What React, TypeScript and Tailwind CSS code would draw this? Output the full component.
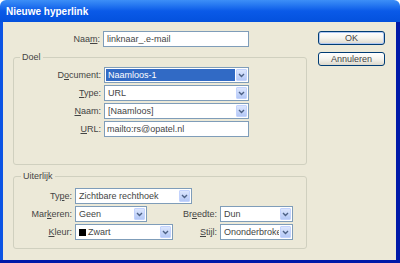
import React from "react";

function Chevron() {
  return (
    <svg width="7" height="5" viewBox="0 0 7 5" className="block">
      <path d="M1 1 L3.5 3.5 L6 1" fill="none" stroke="#4d6185" strokeWidth="1.4" />
    </svg>
  );
}

function Select({
  className,
  children,
  selected,
}: {
  className: string;
  children: React.ReactNode;
  selected?: boolean;
}) {
  return (
    <div className={"flex h-[16px] shrink-0 border border-[#7f9db9] bg-white p-[1px] " + className}>
      <div className="flex min-w-0 flex-1 items-center overflow-hidden pr-[1px]">
        <div
          className={
            "flex h-full min-w-0 flex-1 items-center overflow-hidden whitespace-nowrap pl-[2px] " +
            (selected ? "bg-[#316ac5] text-white" : "text-[#444]")
          }
        >
          {children}
        </div>
      </div>
      <div className="flex w-[11px] shrink-0 items-center justify-center rounded-[1px] border border-[#c3d3fd] bg-gradient-to-b from-[#dce6fd] to-[#b4c8f6]">
        <Chevron />
      </div>
    </div>
  );
}

function Label({ className, children }: { className: string; children: React.ReactNode }) {
  return <div className={"shrink-0 whitespace-nowrap text-right text-[#444] " + className}>{children}</div>;
}

function Button({ children, isDefault }: { children: React.ReactNode; isDefault?: boolean }) {
  return (
    <div
      className={
        "flex h-[14px] w-[67px] items-center justify-center rounded-[3px] border border-[#003c74] bg-gradient-to-b from-[#ffffff] via-[#f5f4ee] to-[#dcd8cc] text-[#444] " +
        (isDefault ? "shadow-[inset_0_0_0_1px_#b0c8f2]" : "")
      }
    >
      {children}
    </div>
  );
}

export default function App() {
  return (
    <div className="flex h-[263px] w-[400px] flex-col overflow-hidden font-['Liberation_Sans',Arial,sans-serif] text-[9px] leading-[11px]">
      <div className="flex h-[22px] shrink-0 items-center rounded-t-[6px] bg-gradient-to-b from-[#3d8ff7] via-[#0a5ae8] to-[#0451dd] pl-[6px]">
        <span className="text-[10px] font-bold text-white">Nieuwe hyperlink</span>
      </div>
      <div className="flex min-h-0 flex-1">
        <div className="w-[3px] shrink-0 bg-[#0b54e4]" />
        <div className="flex flex-1 bg-[#ece9d8] pl-[10px] pt-[9px]">
          <div className="flex w-[294px] shrink-0 flex-col">
            <div className="flex h-[16px] items-center">
              <Label className="w-[87px]">
                Naa<u>m</u>:
              </Label>
              <div className="ml-[3px] flex h-[16px] w-[146px] items-center border border-[#7f9db9] bg-white pl-[3px] text-[#444]">
                linknaar_.e-mail
              </div>
            </div>

            <fieldset className="mt-[5px] rounded-[3px] border border-[#d0d0bf] pb-[27px] pt-[4px]">
              <legend className="ml-[6px] px-[2px] text-[#444]">Doel</legend>
              <div className="flex flex-col gap-[2px]">
                <div className="flex items-center">
                  <Label className="w-[87px]">
                    D<u>o</u>cument:
                  </Label>
                  <Select className="ml-[3px] w-[145px]" selected>
                    Naamloos-1
                  </Select>
                </div>
                <div className="flex items-center">
                  <Label className="w-[87px]">
                    <u>T</u>ype:
                  </Label>
                  <Select className="ml-[3px] w-[145px]">URL</Select>
                </div>
                <div className="flex items-center">
                  <Label className="w-[87px]">
                    <u>N</u>aam:
                  </Label>
                  <Select className="ml-[3px] w-[145px]">[Naamloos]</Select>
                </div>
                <div className="flex items-center">
                  <Label className="w-[87px]">
                    <u>U</u>RL:
                  </Label>
                  <div className="ml-[3px] flex h-[16px] w-[145px] items-center border border-[#7f9db9] bg-white pl-[2px] text-[#444]">
                    mailto:rs@opatel.nl
                  </div>
                </div>
              </div>
            </fieldset>

            <fieldset className="mt-[6px] rounded-[3px] border border-[#d0d0bf] pb-[8px] pr-[13px] pt-[6px]">
              <legend className="ml-[7px] px-[2px] text-[#444]">Uiterlijk</legend>
              <div className="flex flex-col gap-[2px]">
                <div className="flex items-center">
                  <Label className="w-[58px]">
                    Ty<u>p</u>e:
                  </Label>
                  <Select className="ml-[3px] w-[117px]">Zichtbare rechthoek</Select>
                </div>
                <div className="flex items-center justify-between">
                  <div className="flex items-center">
                    <Label className="w-[58px]">
                      Mar<u>k</u>eren:
                    </Label>
                    <Select className="ml-[3px] w-[72px]">Geen</Select>
                  </div>
                  <div className="flex items-center">
                    <Label className="">
                      Br<u>e</u>edte:
                    </Label>
                    <Select className="ml-[3px] w-[73px]">Dun</Select>
                  </div>
                </div>
                <div className="flex items-center justify-between">
                  <div className="flex items-center">
                    <Label className="w-[58px]">
                      <u>K</u>leur:
                    </Label>
                    <Select className="ml-[3px] w-[98px]">
                      <span className="mr-[2px] inline-block h-[7px] w-[7px] shrink-0 bg-black" />
                      Zwart
                    </Select>
                  </div>
                  <div className="flex items-center">
                    <Label className="">
                      <u>S</u>tijl:
                    </Label>
                    <Select className="ml-[3px] w-[73px]">Ononderbroken</Select>
                  </div>
                </div>
              </div>
            </fieldset>
          </div>

          <div className="ml-[11px] flex w-[67px] shrink-0 flex-col gap-[7px]">
            <Button isDefault>OK</Button>
            <Button>Annuleren</Button>
          </div>
        </div>
        <div className="w-[4px] shrink-0 bg-[#0019a8]" />
      </div>
      <div className="h-[3px] shrink-0 bg-[#0019a8]" />
    </div>
  );
}
